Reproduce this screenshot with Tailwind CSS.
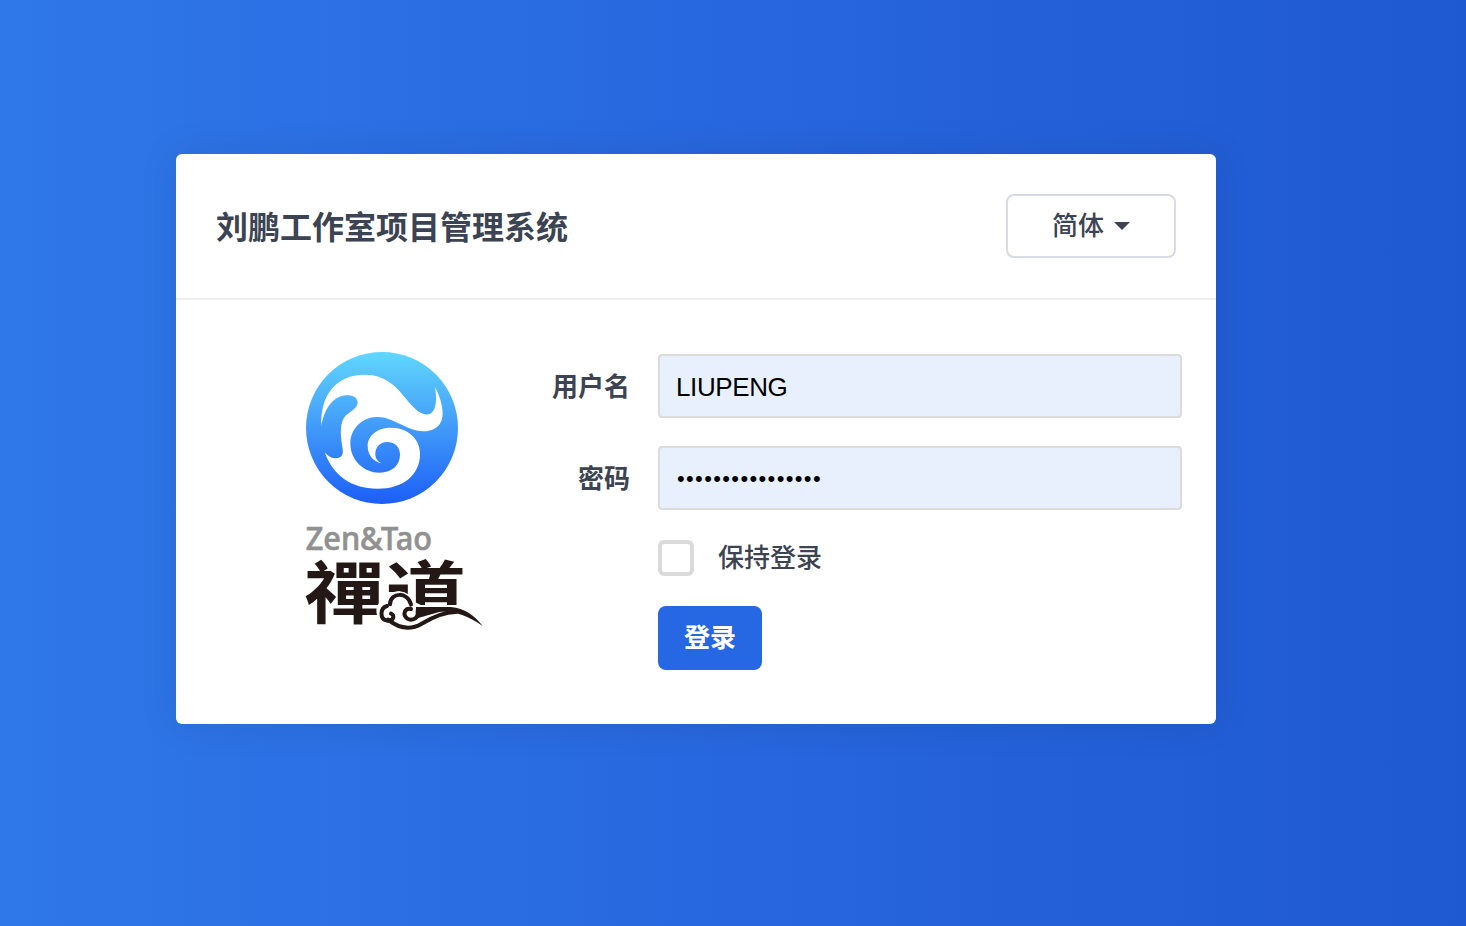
<!DOCTYPE html>
<html lang="zh-CN">
<head>
<meta charset="utf-8">
<title>刘鹏工作室项目管理系统</title>
<script src="https://cdn.jsdelivr.net/npm/@tailwindcss/browser@4"></script>
</head>
<body class="h-[926px] overflow-hidden bg-[linear-gradient(90deg,#2f78e9,#2766de_52%,#1f59d1)] pt-[154px] pl-44 font-['Liberation_Sans','Noto_Sans_CJK_SC',sans-serif] text-[26px] text-[#3c4353]">
<main class="h-[570px] w-[1040px] rounded-md bg-white shadow-[0_0_40px_rgba(0,0,0,0.09)]">
  <header class="flex h-[146px] items-center justify-between border-b-2 border-[#eeeeee] px-10">
    <h1 class="pt-[3px] text-[32px] leading-[46px] font-bold">刘鹏工作室项目管理系统</h1>
    <button class="flex h-16 w-[170px] items-center justify-center gap-2.5 rounded-lg border-2 border-[#d8dbe5] font-medium">
      <span>简体</span>
      <svg class="h-2 w-4" viewBox="0 0 16 8"><path d="M0 0h16L8 8z" fill="#3c4353"/></svg>
    </button>
  </header>
  <div class="flex">
    <div class="w-[320px] pt-[42px] pl-[120px]">
      <svg class="h-[298px] w-[200px]" viewBox="0 0 600 894">
        <defs><linearGradient id="sea" x1="0" y1="0" x2="0" y2="1"><stop offset="0" stop-color="#61d7fd"/><stop offset=".5" stop-color="#419af9"/><stop offset="1" stop-color="#1c5ef8"/></linearGradient></defs>
        <circle cx="258" cy="258" r="228" fill="url(#sea)"/>
        <path fill="#fff" d="M76 252C72 160 120 98 205 98C285 98 315 155 350 193C375 222 405 226 415 200C423 180 420 155 417 135C433 165 440 195 440 215C440 250 415 268 380 268C330 266 290 222 240 225C195 228 163 262 163 305C163 355 205 392 250 392C290 392 312 367 312 338C312 313 295 300 273 300C250 300 238 318 238 335C238 350 245 357 257 364C230 359 215 337 215 312C215 280 245 257 285 257C335 257 372 290 372 335C372 400 320 440 245 440C165 440 110 400 86 330C97 345 110 349 120 349C140 348 143 335 139 315C133 280 130 240 150 220C170 203 185 198 185 180C183 165 170 160 150 160C115 162 86 195 76 252Z"/>
        <text x="29" y="623" textLength="379" lengthAdjust="spacingAndGlyphs" font-family="Noto Sans" font-weight="500" font-size="97" fill="#919191" stroke="#919191" stroke-width="2">Zen&amp;Tao</text>
        <text transform="translate(25 828) scale(1 .86)" textLength="486" lengthAdjust="spacingAndGlyphs" font-family="Noto Sans CJK TC" font-weight="700" font-size="236" fill="#231815">禪道</text>
        <g transform="translate(0 519)" stroke-linecap="round" stroke-linejoin="round">
          <path d="M255 300C248 275 262 262 282 263C286 232 334 232 344 268L372 282H556V340H400C350 347 315 337 292 324Z" fill="#fff" stroke="#fff" stroke-width="24"/>
          <path d="M273 273C252 279 250 312 273 317C292 320 298 301 285 296" fill="none" stroke="#231815" stroke-width="12"/>
          <path d="M282 268C283 231 336 229 345 269M345 282C325 278 319 300 334 311C350 321 368 306 373 288" fill="none" stroke="#231815" stroke-width="12"/>
          <path d="M276 314C312 343 345 345 377 326C416 303 449 291 479 291" fill="none" stroke="#231815" stroke-width="12"/>
          <path d="M360 276H464C506 279 536 302 560 333C508 296 465 288 430 291L358 311Z" fill="#231815"/>
        </g>
      </svg>
    </div>
    <form class="grid grid-cols-[134px_524px] gap-x-7 pt-[54px]">
      <label class="flex h-16 items-center justify-end pt-0.5 font-bold">用户名</label>
      <div class="flex h-16 items-center rounded border-2 border-[#dcdcdc] bg-[#e8f0fe] px-4 pt-0.5 tracking-[-0.4px] text-black">LIUPENG</div>
      <label class="mt-7 flex h-16 items-center justify-end pt-[3px] font-bold">密码</label>
      <div class="mt-7 flex h-16 items-center rounded border-2 border-[#dcdcdc] bg-[#e8f0fe] pr-4 pl-[17px] text-[22px] tracking-[1.36px] text-black">••••••••••••••••</div>
      <div class="col-start-2 mt-[30px] flex h-9 items-center gap-6">
        <span class="size-9 rounded-md border-4 border-[#dadada]"></span>
        <span class="font-medium">保持登录</span>
      </div>
      <button class="col-start-2 mt-[30px] flex h-16 w-[104px] items-center justify-center rounded-lg bg-[#2667e3] font-bold text-white">登录</button>
    </form>
  </div>
</main>
</body>
</html>
